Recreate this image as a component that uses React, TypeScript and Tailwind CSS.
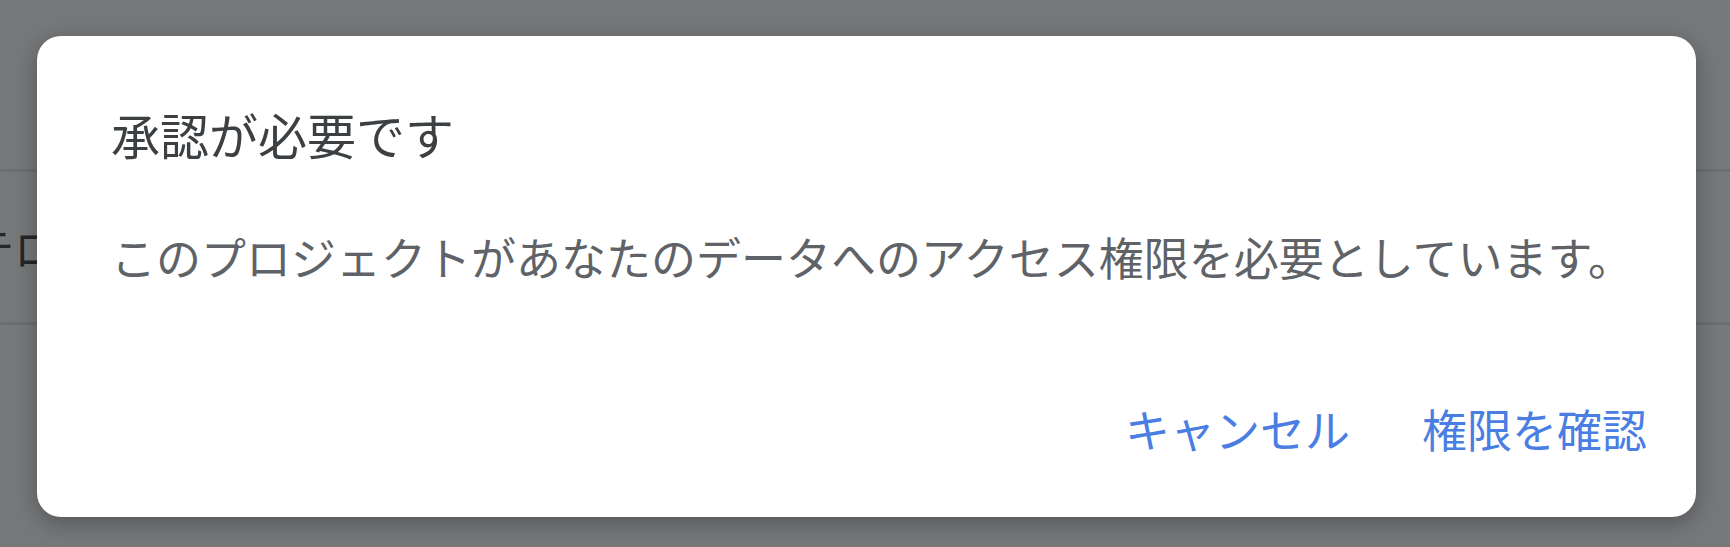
import React from "react";

const jp = "font-['Noto_Sans_CJK_JP','Noto_Sans',sans-serif]";

function PermissionDialog() {
  return (
    <div className="absolute left-[37px] top-[36px] flex h-[481px] w-[1659px] flex-col rounded-[24px] bg-white pl-[74px] pr-[49px] pt-[70px] pb-[60px] shadow-[0_6px_24px_rgba(0,0,0,0.3)]">
      <h2 className="text-[49px] leading-[56px] font-normal text-[#3c4043]">承認が必要です</h2>
      <p className="mt-[67px] text-[45px] leading-[56px] text-[#5f6368]">
        このプロジェクトがあなたのデータへのアクセス権限を必要としています。
      </p>
      <div className="mt-auto flex items-center justify-end gap-[72px]">
        <button className="text-[45px] leading-[56px] text-[#4a7ee3]">キャンセル</button>
        <button className="text-[45px] leading-[56px] text-[#4a7ee3]">権限を確認</button>
      </div>
    </div>
  );
}

export default function App() {
  return (
    <div className={`relative h-[547px] w-[1730px] overflow-hidden bg-[#77787a] ${jp}`}>
      {/* page behind the scrim */}
      <div className="flex flex-col pt-[169px]">
        <div className="h-[3px] bg-[#6d6e70]" />
        <div className="flex h-[150px] items-center -ml-[30px]">
          <span className="text-[44px] text-[#252627]">テロ</span>
        </div>
        <div className="h-[3px] bg-[#6d6e70]" />
      </div>
      <PermissionDialog />
    </div>
  );
}
